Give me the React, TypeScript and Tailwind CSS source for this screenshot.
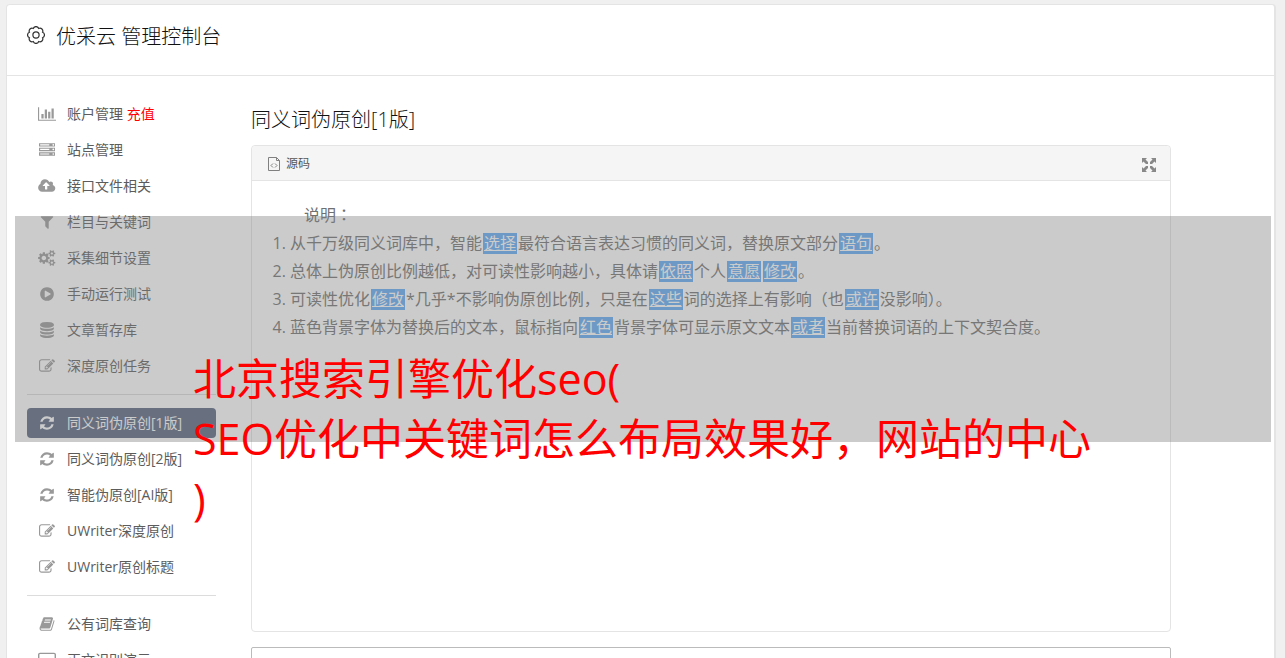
import type { ReactNode } from "react";

const DISK =
  "q237 0 443-43t325-127v170q0 69-103 128t-280 93.5-385 34.5-385-34.5-280-93.5-103-128v-170q119 84 325 127t443 43z";
const SMALL_COG =
  "v140q0 16-149 31-12 27-30 52 51 113 51 138 0 4-4 7-122 71-124 71-8 0-46-47t-52-68q-20 2-30 2t-30-2q-14 21-52 68t-46 47q-2 0-124-71-4-3-4-7 0-25 51-138-18-25-30-52-149-15-149-31v-140q0-16 149-31 13-29 30-52-51-113-51-138 0-4 4-7 4-2 35-20t59-34 30-16q8 0 46 46.5t52 67.5q20-2 30-2t30 2q51-71 92-112l6-2q4 0 124 70 4 3 4 7 0 25-51 138 17 23 30 52 149 15 149 31z";
const SERVER_DOT = "q0-40-28-68t-68-28-68 28-28 68 28 68 68 28 68-28 28-68z";

const icons = {
  chart: {
    w: 2048,
    d: "M640 896v512h-256v-512h256zm384-512v1024h-256v-1024h256zm1024 1152v128h-2048v-1536h128v1408h1920zm-640-896v768h-256v-768h256zm384-384v1152h-256v-1152h256z",
  },
  server: {
    w: 1792,
    d: `M128 1408h1024v-128h-1024v128zm0-512h1024v-128h-1024v128zm1568 448${SERVER_DOT}m-1568-960h1024v-128h-1024v128zm1568 448${SERVER_DOT}m0-512${SERVER_DOT}m96 832v384h-1792v-384h1792zm0-512v384h-1792v-384h1792zm0-512v384h-1792v-384h1792z`,
  },
  upload: {
    w: 1856,
    d: "M1216 864q0-14-9-23l-352-352q-9-9-23-9t-23 9l-351 351q-10 12-10 24 0 14 9 23t23 9h224v352q0 13 9.5 22.5t22.5 9.5h192q13 0 22.5-9.5t9.5-22.5v-352h224q13 0 22.5-9.5t9.5-22.5zm640 288q0 159-112.5 271.5t-271.5 112.5h-1088q-185 0-316.5-131.5t-131.5-316.5q0-130 70-240t188-165q-2-30-2-43 0-212 150-362t362-150q156 0 285.5 87t188.5 231q71-62 166-62 106 0 181 75t75 181q0 76-41 138 130 31 213.5 135.5t83.5 238.5z",
  },
  filter: {
    w: 1792,
    d: "M1595 295q17 41-14 70l-493 493v742q0 42-39 59-13 5-25 5-27 0-45-19l-256-256q-19-19-19-45v-486l-493-493q-31-29-14-70 17-39 59-39h1280q42 0 59 39z",
  },
  cogs: {
    w: 1856,
    d: `M832 896q0-106-75-181t-181-75-181 75-75 181 75 181 181 75 181-75 75-181zm768 512q0-52-38-90t-90-38-90 38-38 90q0 53 37.5 90.5t90.5 37.5 90.5-37.5 37.5-90.5zm0-1024q0-52-38-90t-90-38-90 38-38 90q0 53 37.5 90.5t90.5 37.5 90.5-37.5 37.5-90.5zm-384 421v185q0 10-7 19.5t-16 10.5l-155 24q-11 35-32 76 34 48 90 115 7 11 7 20 0 12-7 19-23 30-82.5 89.5t-78.5 59.5q-11 0-21-7l-115-90q-37 19-77 31-11 108-23 155-7 24-30 24h-186q-11 0-20-7.5t-10-17.5l-23-153q-34-10-75-31l-118 89q-7 7-20 7-11 0-21-8-144-133-144-160 0-9 7-19 10-14 41-53t47-61q-23-44-35-82l-152-24q-10-1-17-9.5t-7-19.5v-185q0-10 7-19.5t16-10.5l155-24q11-35 32-76-34-48-90-115-7-11-7-20 0-12 7-20 22-30 82-89t79-59q11 0 21 7l115 90q34-18 77-32 11-108 23-154 7-24 30-24h186q11 0 20 7.5t10 17.5l23 153q34 10 75 31l118-89q8-7 20-7 11 0 21 8 144 133 144 160 0 8-7 19-12 16-42 54t-45 60q23 48 34 82l152 23q10 2 17 10.5t7 19.5zm640 533${SMALL_COG}m0-1024${SMALL_COG}`,
  },
  play: {
    w: 1792,
    d: "M896 128q209 0 385.5 103t279.5 279.5 103 385.5-103 385.5-279.5 279.5-385.5 103-385.5-103-279.5-279.5-103-385.5 103-385.5 279.5-279.5 385.5-103zm384 823q32-18 32-55t-32-55l-544-320q-31-19-64-1-32 19-32 56v640q0 37 32 56 16 8 32 8 17 0 32-9z",
  },
  database: {
    w: 1792,
    d: `M896 768${DISK}m0 768${DISK}m0-384${DISK}m0-1152q208 0 385 34.5t280 93.5 103 128v128q0 69-103 128t-280 93.5-385 34.5-385-34.5-280-93.5-103-128v-128q0-69 103-128t280-93.5 385-34.5z`,
  },
  edit: {
    w: 1792,
    d: "M888 1184l116-116-152-152-116 116v56h96v96h56zm440-720q-16-16-33 1l-350 350q-17 17-1 33t33-1l350-350q17-17 1-33zm80 594v190q0 119-84.5 203.5t-203.5 84.5h-832q-119 0-203.5-84.5t-84.5-203.5v-832q0-119 84.5-203.5t203.5-84.5h832q63 0 117 25 15 7 18 23 3 17-9 29l-49 49q-14 14-32 8-23-6-45-6h-832q-66 0-113 47t-47 113v832q0 66 47 113t113 47h832q66 0 113-47t47-113v-126q0-13 9-22l64-64q15-15 35-7t20 29zm-96-738l288 288-672 672h-288v-288zm444 132l-92 92-288-288 92-92q28-28 68-28t68 28l152 152q28 28 28 68t-28 68z",
  },
  refresh: {
    w: 1792,
    d: "M1639 1056q0 5-1 7-64 268-268 434.5t-478 166.5q-146 0-282.5-55t-243.5-157l-129 129q-19 19-45 19t-45-19-19-45v-448q0-26 19-45t45-19h448q26 0 45 19t19 45-19 45l-137 137q71 66 161 102t187 36q134 0 250-65t186-179q11-17 53-117 8-23 30-23h192q13 0 22.5 9.5t9.5 22.5zm25-800v448q0 26-19 45t-45 19h-448q-26 0-45-19t-19-45 19-45l138-138q-148-137-349-137-134 0-250 65t-186 179q-11 17-53 117-8 23-30 23h-199q-13 0-22.5-9.5t-9.5-22.5v-7q65-268 270-434.5t480-166.5q146 0 284 55.5t245 156.5l130-129q19-19 45-19t45 19 19 45z",
  },
  book: {
    w: 1792,
    d: "M1703 478q40 57 18 129l-275 906q-19 64-76.5 107.5t-122.5 43.5h-923q-77 0-148.5-53.5t-99.5-131.5q-24-67-2-127 0-4 3-27t4-37q1-8-3-21.5t-3-19.5q2-11 8-21t16.5-23.5 16.5-23.5q23-38 45-91.5t30-91.5q3-10 .5-30t-.5-28q3-11 17-28t17-23q21-36 42-92t25-90q1-9-2.5-32t.5-28q4-13 22-30.5t22-22.5q19-26 42.5-84.5t27.5-96.5q1-8-3-25.5t-2-26.5q2-8 9-18t18-23 17-21q8-12 16.5-30.5t15-35 16-36 19.5-32 26.5-23.5 36-11.5 47.5 5.5l-1 3q38-9 51-9h761q74 0 114 56t18 130l-274 906q-36 119-71.5 153.5t-128.5 34.5h-869q-27 0-38 15-11 16-1 43 24 70 144 70h923q29 0 56-15.5t35-41.5l300-987q7-22 5-57 38 15 59 43zm-1064 2q-4 13 2 22.5t20 9.5h608q13 0 25.5-9.5t16.5-22.5l21-64q4-13-2-22.5t-20-9.5h-608q-13 0-25.5 9.5t-16.5 22.5zm-83 256q-4 13 2 22.5t20 9.5h608q13 0 25.5-9.5t16.5-22.5l21-64q4-13-2-22.5t-20-9.5h-608q-13 0-25.5 9.5t-16.5 22.5z",
  },
  laptop: {
    w: 2048,
    d: "M224 1344q-92 0-158-66t-66-158v-832q0-92 66-158t158-66h1600q92 0 158 66t66 158v832q0 92-66 158t-158 66h-1600zm-64-1056v832q0 64 64 64h1600q64 0 64-64v-832q0-64-64-64h-1600q-64 0-64 64zm-160 1184h2048v96q0 96-128 96h-1792q-128 0-128-96z",
  },
};

type IconName = keyof typeof icons;

function MenuIcon({ name }: { name: IconName }) {
  const { w, d } = icons[name];
  return (
    <svg aria-hidden="true" viewBox={`0 0 ${w} 1792`} className="h-4 w-[18px] shrink-0" fill="currentColor">
      <path d={d} />
    </svg>
  );
}

type Item = { icon: IconName; label: string; extra?: string; active?: boolean };

const groups: Item[][] = [
  [
    { icon: "chart", label: "账户管理", extra: "充值" },
    { icon: "server", label: "站点管理" },
    { icon: "upload", label: "接口文件相关" },
    { icon: "filter", label: "栏目与关键词" },
    { icon: "cogs", label: "采集细节设置" },
    { icon: "play", label: "手动运行测试" },
    { icon: "database", label: "文章暂存库" },
    { icon: "edit", label: "深度原创任务" },
  ],
  [
    { icon: "refresh", label: "同义词伪原创[1版]", active: true },
    { icon: "refresh", label: "同义词伪原创[2版]" },
    { icon: "refresh", label: "智能伪原创[AI版]" },
    { icon: "edit", label: "UWriter深度原创" },
    { icon: "edit", label: "UWriter原创标题" },
  ],
  [
    { icon: "book", label: "公有词库查询" },
    { icon: "laptop", label: "正文识别演示" },
  ],
];

function Sidebar() {
  return (
    <nav className="w-[189px] shrink-0 pt-[23px]">
      {groups.map((items, index) => (
        <ul
          key={index}
          className={
            index > 0
              ? "mt-[13px] flex flex-col gap-1.5 border-t border-[#dcdcdc] pt-[13px]"
              : "flex flex-col gap-1.5"
          }
        >
          {items.map((item) => (
            <li key={item.label}>
              <a
                href="#"
                className={
                  item.active
                    ? "flex h-[30px] items-center gap-[11px] rounded bg-[#576580] pl-[11px] text-sm whitespace-nowrap text-white"
                    : "flex h-[30px] items-center gap-[11px] rounded pl-[11px] text-sm whitespace-nowrap text-[#5c5c5c]"
                }
              >
                <span className={item.active ? "text-white" : "text-[#999]"}>
                  <MenuIcon name={item.icon} />
                </span>
                <span>
                  {item.label}
                  {item.extra && <span className="text-[#f00]"> {item.extra}</span>}
                </span>
              </a>
            </li>
          ))}
        </ul>
      ))}
    </nav>
  );
}

function Word({ children }: { children: ReactNode }) {
  return (
    <a href="#" className="mx-px inline-block bg-[#5eaaf6] px-px leading-[21px] text-white underline">
      {children}
    </a>
  );
}

const TEETH = 8;
const gearPoints = Array.from({ length: TEETH }, (_, i) => {
  const angle = ((i + 0.5) * 2 * Math.PI) / TEETH - Math.PI / 2;
  return `${(9 + 7.1 * Math.cos(angle)).toFixed(2)} ${(9 + 7.1 * Math.sin(angle)).toFixed(2)}`;
});
const gearPath = `M${gearPoints[TEETH - 1]}${gearPoints.map((point) => `A2.9 2.9 0 0 1 ${point}`).join("")}Z`;

function GearIcon() {
  return (
    <svg aria-hidden="true" viewBox="0 0 18 18" className="mt-[5px] size-[18px]" fill="none" stroke="#333" strokeWidth="1.2">
      <path d={gearPath} />
      <circle cx="9" cy="9" r="3.1" />
    </svg>
  );
}

function SourceIcon() {
  return (
    <svg aria-hidden="true" viewBox="0 0 12 14" className="h-3.5 w-3" fill="none" stroke="#808080">
      <path d="M.5.5h8l3 3v10H.5zM8.5.5v3h3" />
      <path d="M5 6.500L3 8.500l2 2M7 6.500l2 2-2 2" />
    </svg>
  );
}

function ExpandIcon() {
  return (
    <svg aria-hidden="true" viewBox="0 0 14 14" className="size-3.5" fill="#888">
      <path d="M0 0h5L3.500 1.500 6 4v2H4L1.500 3.500 0 5zM14 0v5l-1.500-1.500L10 6H8V4l2.500-2.500L9 0zM0 14V9l1.500 1.500L4 8h2v2l-2.500 2.500L5 14zM14 14H9l1.500-1.500L8 10V8h2l2.500 2.500L14 9z" />
    </svg>
  );
}

export default function App() {
  return (
    <div className="relative h-screen overflow-hidden bg-[#f0f0f0] pt-1 pr-[9px] pl-1.5 font-['Open_Sans','Noto_Sans_CJK_SC',sans-serif]">
      <div className="min-h-full rounded-t border border-r-2 border-[#e4e4e4] bg-white">
        <header className="flex h-[71px] items-start gap-[11px] border-b border-[#e4e4e4] pt-4 pl-5 text-[#111]">
          <GearIcon />
          <h1 className="text-xl leading-8 font-light">优采云 管理控制台</h1>
        </header>
        <div className="flex gap-[35px] pl-5">
          <Sidebar />
          <main className="max-w-[920px] flex-1 pt-7">
            <h2 className="text-xl leading-8 font-light text-[#111]">同义词伪原创[1版]</h2>
            <section className="mt-[9px] min-h-[487px] rounded border border-[#e4e4e4]">
              <div className="flex h-[35px] items-center justify-between rounded-t border-b border-[#e4e4e4] bg-[#f5f5f5] pr-3.5 pl-4">
                <span className="flex items-center gap-[6px] pt-0.5 text-xs text-[#555]">
                  <SourceIcon />
                  源码
                </span>
                <button type="button" aria-label="全屏" className="pt-1">
                  <ExpandIcon />
                </button>
              </div>
              <div className="pt-5 pl-[38px] text-base leading-7 text-[#707070]">
                <p className="pl-3.5">
                  说明<span className="font-['Noto_Sans_CJK_TC',sans-serif] leading-none">：</span>
                </p>
                <ol className="list-decimal">
                  <li>
                    从千万级同义词库中，智能<Word>选择</Word>最符合语言表达习惯的同义词，替换原文部分<Word>语句</Word>。
                  </li>
                  <li>
                    总体上伪原创比例越低，对可读性影响越小，具体请<Word>依照</Word>个人<Word>意愿</Word>
                    <Word>修改</Word>。
                  </li>
                  <li>
                    可读性优化<Word>修改</Word>*几乎*不影响伪原创比例，只是在<Word>这些</Word>词的选择上有影响（也
                    <Word>或许</Word>没影响）。
                  </li>
                  <li>
                    蓝色背景字体为替换后的文本，鼠标指向<Word>红色</Word>背景字体可显示原文文本<Word>或者</Word>
                    当前替换词语的上下文契合度。
                  </li>
                </ol>
              </div>
            </section>
            <textarea
              aria-label="原文"
              className="mt-[15px] block h-40 w-full resize-none rounded-xs border border-[#bbb]"
            />
          </main>
        </div>
      </div>
      <div className="pointer-events-none absolute top-[216px] right-3.5 left-[15px] h-[226px] bg-[#808080]/41">
        <p className="pt-[133px] pl-[178px] text-[43px] leading-[60px] whitespace-nowrap text-[#f00]">
          北京搜索引擎优化seo(
          <br />
          SEO优化中关键词怎么布局效果好，网站的中心
          <br />)
        </p>
      </div>
    </div>
  );
}
